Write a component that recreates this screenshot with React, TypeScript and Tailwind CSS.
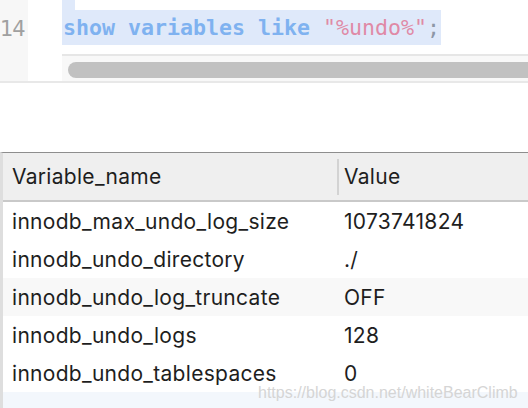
import React from 'react'

const rows = [
  { name: 'innodb_max_undo_log_size', value: '1073741824' },
  { name: 'innodb_undo_directory', value: './' },
  { name: 'innodb_undo_log_truncate', value: 'OFF', shaded: true },
  { name: 'innodb_undo_logs', value: '128' },
  { name: 'innodb_undo_tablespaces', value: '0' },
]

export default function App() {
  return (
    <div className="relative w-[528px] h-[408px] overflow-hidden bg-white font-['Liberation_Sans',sans-serif]">
      {/* Editor */}
      <div className="flex h-[83px] border-b-2 border-[#e8e8e8]">
        <div className="w-[28px] bg-[#f7f7f7] pt-[16px] text-[21px] leading-[26px] text-[#a0a0a0] font-['DejaVu_Sans',sans-serif] tracking-[-1px]">
          14
        </div>
        <div className="w-[34px]" />
        <div className="flex-1 flex flex-col">
          <div className="h-[54px]">
            <div className="w-[13px] h-[10px] bg-[#dfe9fa]" />
            <div className="w-[379px] h-[35px] bg-[#dfe9fa] flex items-center pl-[1px] pt-[1px] font-['DejaVu_Sans_Mono',monospace] text-[21.6px] whitespace-pre">
              <span className="font-bold text-[#7fb2f0]">show variables like </span>
              <span className="text-[#e08aa6]">"%undo%"</span>
              <span className="text-[#8d97a6]">;</span>
            </div>
          </div>
          <div className="flex-1 bg-[#f8f8f8] border-t-2 border-[#e6e6e6] pl-[6px] pt-[6px]">
            <div className="h-[16px] rounded-l-full bg-[#c1c1c1]" />
          </div>
        </div>
      </div>

      {/* Result grid */}
      <div className="mt-[69px] border-t border-[#8e8e8e] border-l-[3px] border-l-[#dedede] font-['Inter',sans-serif] text-[21px] tracking-[0.3px] text-[#1e1e1e]">
        <div className="flex h-[49px] bg-[#efefef] border-b-2 border-[#c9c9c9] items-center">
          <div className="w-[334px] pl-[9px]">Variable_name</div>
          <div className="w-[2px] h-[36px] bg-[#d3d3d3]" />
          <div className="pl-[5px]">Value</div>
        </div>
        {rows.map((r) => (
          <div
            key={r.name}
            className={`flex h-[38px] items-center pt-[2px] ${r.shaded ? 'bg-[#f8f8f8]' : ''}`}
          >
            <div className="w-[336px] pl-[9px]">{r.name}</div>
            <div className="pl-[5px]">{r.value}</div>
          </div>
        ))}
        <div className="h-[40px] bg-[#f3f7fc]" />
      </div>

      <div className="absolute left-[258px] top-[381px] text-[16px] text-[#d5d5d5] font-['Liberation_Sans',sans-serif]">
        https://blog.csdn.net/whiteBearClimb
      </div>
    </div>
  )
}
